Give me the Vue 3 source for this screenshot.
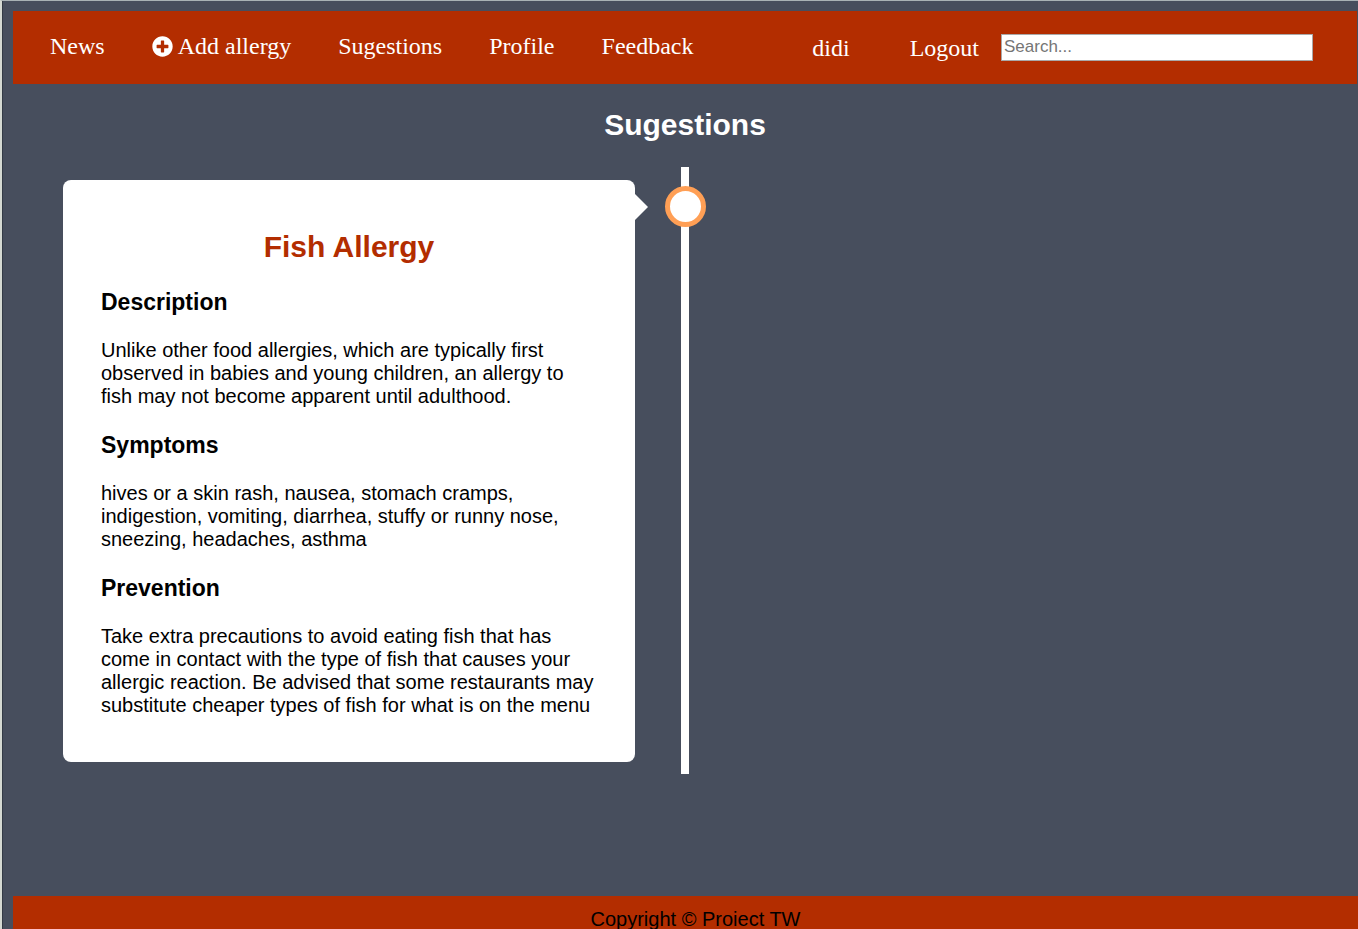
<script setup>
const links = [
  { label: 'News' },
  { label: 'Add allergy', icon: true },
  { label: 'Sugestions' },
  { label: 'Profile' },
  { label: 'Feedback' },
]
const entries = [
  {
    name: 'Fish Allergy',
    sections: [
      {
        title: 'Description',
        text: 'Unlike other food allergies, which are typically first observed in babies and young children, an allergy to fish may not become apparent until adulthood.',
      },
      {
        title: 'Symptoms',
        text: 'hives or a skin rash, nausea, stomach cramps, indigestion, vomiting, diarrhea, stuffy or runny nose, sneezing, headaches, asthma',
      },
      {
        title: 'Prevention',
        text: 'Take extra precautions to avoid eating fish that has come in contact with the type of fish that causes your allergic reaction. Be advised that some restaurants may substitute cheaper types of fish for what is on the menu',
      },
    ],
  },
]
</script>

<template>
  <div class="page">
    <header class="bar">
      <nav class="links">
        <a v-for="link in links" :key="link.label" href="#">
          <svg v-if="link.icon" class="plus" viewBox="0 0 512 512" aria-hidden="true">
            <path
              fill="currentColor"
              d="M256 8C119 8 8 119 8 256s111 248 248 248 248-111 248-248S393 8 256 8zm144 276c0 6.600-5.400 12-12 12h-92v92c0 6.600-5.400 12-12 12h-56c-6.600 0-12-5.400-12-12v-92h-92c-6.600 0-12-5.400-12-12v-56c0-6.600 5.400-12 12-12h92v-92c0-6.600 5.400-12 12-12h56c6.600 0 12 5.400 12 12v92h92c6.600 0 12 5.400 12 12v56z"
            />
          </svg>{{ link.label }}
        </a>
      </nav>
      <div class="account">
        <a href="#">didi</a>
        <a href="#">Logout</a>
        <input type="search" placeholder="Search..." aria-label="Search" />
      </div>
    </header>

    <main>
      <h1>Sugestions</h1>
      <div class="timeline">
        <div v-for="entry in entries" :key="entry.name" class="entry">
          <article class="card">
            <h2>{{ entry.name }}</h2>
            <section v-for="section in entry.sections" :key="section.title">
              <h3>{{ section.title }}</h3>
              <p>{{ section.text }}</p>
            </section>
          </article>
        </div>
      </div>
    </main>

    <footer>Copyright © Proiect TW</footer>
  </div>
</template>

<style>
body {
  margin: 0;
  background: #474e5d;
}
</style>

<style scoped>
* {
  box-sizing: border-box;
}
.page {
  display: flex;
  flex-direction: column;
  min-height: 100vh;
  padding: 10px 1px 0 11px;
  border-top: 1px solid #a9b2b5;
  border-left: 2px solid #d5d9d2;
  box-shadow: inset 1px 0 #333a45;
  background: #474e5d;
  font-family: "Liberation Sans", Arial, sans-serif;
  font-size: 20px;
  line-height: 23px;
  color: #000;
}
.bar {
  display: flex;
  justify-content: space-between;
  align-items: center;
  flex: none;
  min-height: 73px;
  padding: 0 44px 0 37px;
  background: #b32d00;
  font-family: "Liberation Serif", "Times New Roman", serif;
  font-size: 24px;
  line-height: 28px;
}
.bar a {
  color: #fff;
  text-decoration: none;
}
.links {
  display: flex;
  gap: 47px;
  padding-bottom: 4px;
}
.plus {
  width: 21px;
  height: 21px;
  margin-right: 5px;
  vertical-align: -3px;
}
.account {
  display: flex;
  align-items: center;
}
.account a + a {
  margin-left: 60px;
}
.account input {
  width: 312px;
  height: 27px;
  margin: 0 0 0 22px;
  padding: 0 2px 1px;
  border: 1px solid #a9a9a9;
  border-radius: 0;
  background: #fff;
  appearance: none;
  font-family: "Liberation Sans", Arial, sans-serif;
  font-size: 17px;
}
.account input::placeholder {
  color: #757575;
}
main {
  flex: 1 0 auto;
}
h1 {
  margin: 23px 0 25px;
  font-size: 30px;
  line-height: 35px;
  text-align: center;
  color: #fff;
}
.timeline {
  position: relative;
}
.timeline::after {
  content: "";
  position: absolute;
  top: 0;
  bottom: 0;
  left: 50%;
  width: 8px;
  margin-left: -4px;
  background: #fff;
}
.entry {
  position: relative;
  width: 50%;
  padding: 13px 50px 12px;
}
.entry::before {
  content: "";
  position: absolute;
  top: 27px;
  right: 37px;
  border: solid transparent;
  border-width: 13px 0 13px 13px;
  border-left-color: #fff;
}
.entry::after {
  content: "";
  position: absolute;
  z-index: 1;
  top: 19px;
  right: -21px;
  width: 31px;
  height: 31px;
  border: 5px solid #ff9f55;
  border-radius: 50%;
  background: #fff;
}
.card {
  padding: 50px 38px 45px;
  border-radius: 8px;
  background: #fff;
}
h2 {
  margin: 0 0 25px;
  font-size: 30px;
  line-height: 34px;
  text-align: center;
  color: #b32d00;
}
h3 {
  margin: 0 0 24px;
  font-size: 23px;
  line-height: 26px;
}
p {
  margin: 0;
}
section + section {
  margin-top: 24px;
}
footer {
  flex: none;
  height: 33px;
  margin-right: -1px;
  padding: 12px 0 0 20px;
  background: #b32d00;
  text-align: center;
  overflow: hidden;
}
</style>
